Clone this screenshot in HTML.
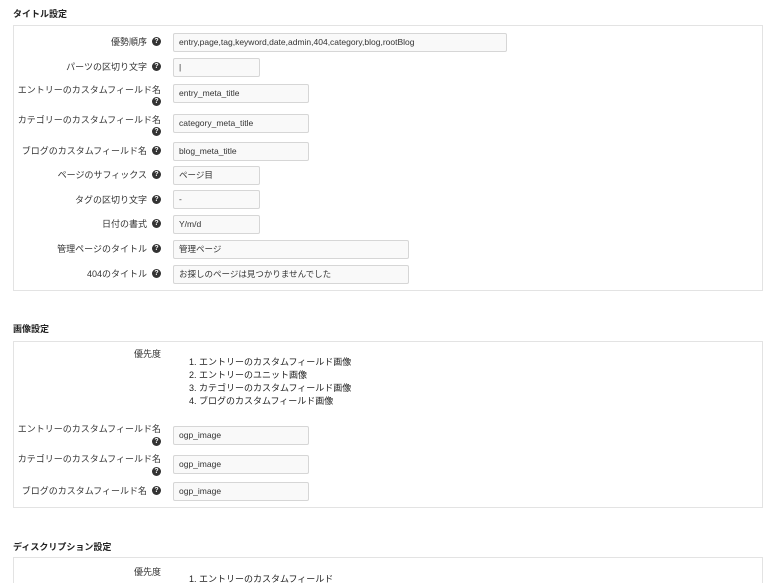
<!DOCTYPE html>
<html><head><meta charset="utf-8"><style>
*{margin:0;padding:0;box-sizing:border-box}
html,body{width:775px;height:583px;overflow:hidden}
body{background:#fff;position:relative;font-family:"Liberation Sans","Noto Sans CJK JP",sans-serif;font-size:9px;color:#333}
.h{position:absolute;left:13px;font-weight:bold;font-size:9px;color:#222}
.box{position:absolute;left:13px;width:750px;border:1px solid #e3e3e3;background:#fff}
.l{position:absolute;right:628px;text-align:right;line-height:12px;white-space:nowrap}
.l2{right:614px}
.q{position:absolute;left:152px;width:9px;height:9px;border-radius:50%;background:#333;color:#fff;font-size:7px;font-weight:bold;line-height:9px;text-align:center}
.i{position:absolute;left:173px;height:19px;border:1px solid #d6d6d6;border-radius:2px;background:#f9f9f9;padding-left:5px;line-height:17px;font-size:8.5px;color:#333;white-space:nowrap}
.li{position:absolute;left:189px;line-height:13px;font-size:9px;color:#222}
</style></head><body>
<div class="h" style="top:7px">タイトル設定</div>
<div class="box" style="top:25px;height:266px"></div>
<div class="l" style="top:36px">優勢順序</div><div class="q" style="top:37px">?</div><div class="i" style="top:33px;width:334px">entry,page,tag,keyword,date,admin,404,category,blog,rootBlog</div>
<div class="l" style="top:61px">パーツの区切り文字</div><div class="q" style="top:62px">?</div><div class="i" style="top:58px;width:87px">|</div>
<div class="l l2" style="top:84px">エントリーのカスタムフィールド名</div><div class="q" style="top:97px">?</div><div class="i" style="top:84px;width:136px">entry_meta_title</div>
<div class="l l2" style="top:114px">カテゴリーのカスタムフィールド名</div><div class="q" style="top:127px">?</div><div class="i" style="top:114px;width:136px">category_meta_title</div>
<div class="l" style="top:145px">ブログのカスタムフィールド名</div><div class="q" style="top:146px">?</div><div class="i" style="top:142px;width:136px">blog_meta_title</div>
<div class="l" style="top:169px">ページのサフィックス</div><div class="q" style="top:170px">?</div><div class="i" style="top:166px;width:87px">ページ目</div>
<div class="l" style="top:194px">タグの区切り文字</div><div class="q" style="top:195px">?</div><div class="i" style="top:190px;width:87px">-</div>
<div class="l" style="top:218px">日付の書式</div><div class="q" style="top:219px">?</div><div class="i" style="top:215px;width:87px">Y/m/d</div>
<div class="l" style="top:243px">管理ページのタイトル</div><div class="q" style="top:244px">?</div><div class="i" style="top:240px;width:236px">管理ページ</div>
<div class="l" style="top:268px">404のタイトル</div><div class="q" style="top:269px">?</div><div class="i" style="top:265px;width:236px">お探しのページは見つかりませんでした</div>

<div class="h" style="top:322px">画像設定</div>
<div class="box" style="top:341px;height:167px"></div>
<div class="l l2" style="top:348px">優先度</div>
<div class="li" style="top:356px">1. エントリーのカスタムフィールド画像</div>
<div class="li" style="top:369px">2. エントリーのユニット画像</div>
<div class="li" style="top:382px">3. カテゴリーのカスタムフィールド画像</div>
<div class="li" style="top:395px">4. ブログのカスタムフィールド画像</div>
<div class="l l2" style="top:423px">エントリーのカスタムフィールド名</div><div class="q" style="top:437px">?</div><div class="i" style="top:426px;width:136px">ogp_image</div>
<div class="l l2" style="top:453px">カテゴリーのカスタムフィールド名</div><div class="q" style="top:467px">?</div><div class="i" style="top:455px;width:136px">ogp_image</div>
<div class="l" style="top:485px">ブログのカスタムフィールド名</div><div class="q" style="top:486px">?</div><div class="i" style="top:482px;width:136px">ogp_image</div>

<div class="h" style="top:540px">ディスクリプション設定</div>
<div class="box" style="top:557px;height:40px"></div>
<div class="l l2" style="top:566px">優先度</div>
<div class="li" style="top:573px">1. エントリーのカスタムフィールド</div>
</body></html>
